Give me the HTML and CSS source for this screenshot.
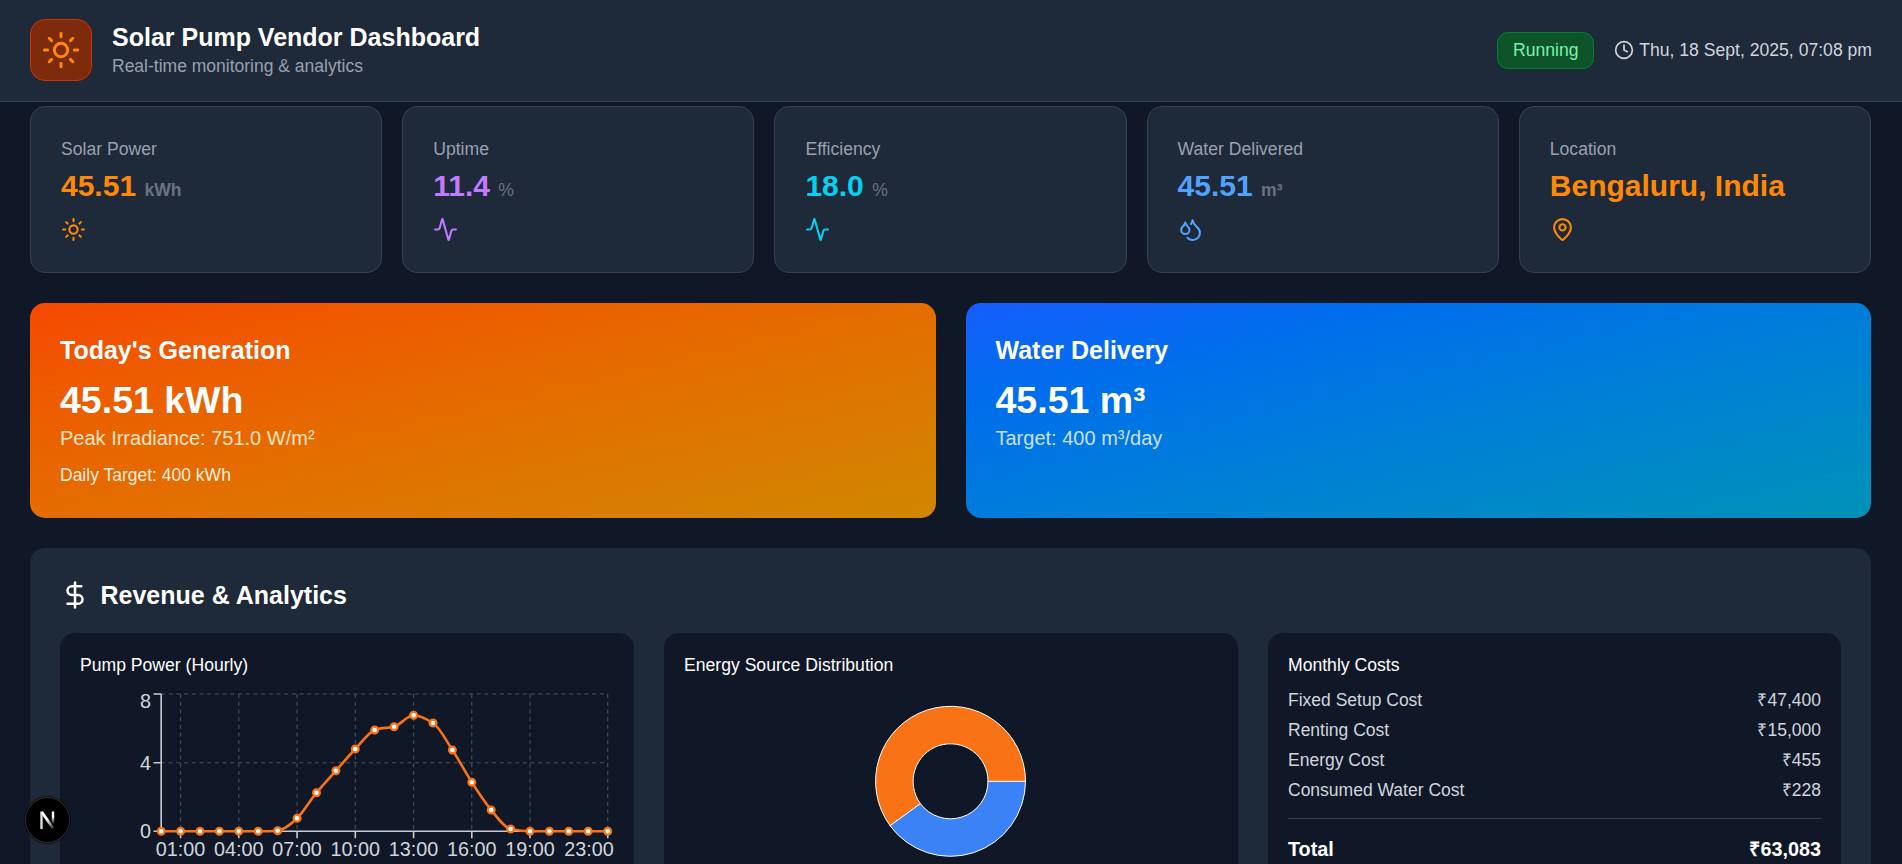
FILE: index.html
```html
<!DOCTYPE html>
<html lang="en">
<head>
<meta charset="utf-8">
<title>Solar Pump Vendor Dashboard</title>
<link rel="stylesheet" href="styles.css">
</head>
<body>
<header class="topbar">
  <div class="brand">
    <div class="brand-icon">
      <svg class="icon-40" viewBox="0 0 24 24"><circle cx="12" cy="12" r="4"/><path d="M12 2v2M12 20v2M4.93 4.93l1.41 1.41M17.66 17.66l1.41 1.41M2 12h2M20 12h2M6.34 17.66l-1.41 1.41M19.07 4.93l-1.41 1.41"/></svg>
    </div>
    <div class="brand-text">
      <h1 class="brand-title">Solar Pump Vendor Dashboard</h1>
      <p class="brand-sub">Real-time monitoring &amp; analytics</p>
    </div>
  </div>
  <div class="status">
    <span class="badge">Running</span>
    <span class="clock">
      <svg class="icon-20" viewBox="0 0 24 24"><circle cx="12" cy="12" r="10"/><path d="M12 6v6l4 2"/></svg>
      Thu, 18 Sept, 2025, 07:08 pm
    </span>
  </div>
</header>

<main class="page">
  <section class="stats">
    <article class="stat">
      <div class="stat-label">Solar Power</div>
      <div class="stat-value c-orange">45.51 <span class="unit">kWh</span></div>
      <svg class="stat-icon c-orange" viewBox="0 0 24 24"><circle cx="12" cy="12" r="4"/><path d="M12 2v2M12 20v2M4.93 4.93l1.41 1.41M17.66 17.66l1.41 1.41M2 12h2M20 12h2M6.34 17.66l-1.41 1.41M19.07 4.93l-1.41 1.41"/></svg>
    </article>
    <article class="stat">
      <div class="stat-label">Uptime</div>
      <div class="stat-value c-purple">11.4 <span class="unit unit-pct">%</span></div>
      <svg class="stat-icon c-purple" viewBox="0 0 24 24"><path d="M22 12h-2.48a2 2 0 0 0-1.93 1.46l-2.35 8.36a.25.25 0 0 1-.48 0L9.24 2.18a.25.25 0 0 0-.48 0l-2.35 8.36A2 2 0 0 1 4.49 12H2"/></svg>
    </article>
    <article class="stat">
      <div class="stat-label">Efficiency</div>
      <div class="stat-value c-cyan">18.0 <span class="unit unit-pct">%</span></div>
      <svg class="stat-icon c-cyan" viewBox="0 0 24 24"><path d="M22 12h-2.48a2 2 0 0 0-1.93 1.46l-2.35 8.36a.25.25 0 0 1-.48 0L9.24 2.18a.25.25 0 0 0-.48 0l-2.35 8.36A2 2 0 0 1 4.49 12H2"/></svg>
    </article>
    <article class="stat">
      <div class="stat-label">Water Delivered</div>
      <div class="stat-value c-blue">45.51 <span class="unit">m³</span></div>
      <svg class="stat-icon c-blue" viewBox="0 0 24 24"><path d="M7 16.3c2.2 0 4-1.83 4-4.05 0-1.16-.57-2.26-1.71-3.19S7.29 6.75 7 5.3c-.29 1.45-1.14 2.84-2.29 3.76S3 11.1 3 12.25c0 2.22 1.8 4.05 4 4.05z"/><path d="M12.56 6.6A10.97 10.97 0 0 0 14 3.02c.5 2.5 2 4.9 4 6.5s3 3.5 3 5.5a6.98 6.98 0 0 1-11.91 4.97"/></svg>
    </article>
    <article class="stat">
      <div class="stat-label">Location</div>
      <div class="stat-value c-orange">Bengaluru, India</div>
      <svg class="stat-icon c-orange" viewBox="0 0 24 24"><path d="M20 10c0 4.993-5.539 10.193-7.399 11.799a1 1 0 0 1-1.202 0C9.539 20.193 4 14.993 4 10a8 8 0 0 1 16 0"/><circle cx="12" cy="10" r="3"/></svg>
    </article>
  </section>

  <section class="hero-row">
    <article class="hero hero-orange">
      <h2 class="hero-title">Today's Generation</h2>
      <div class="hero-value">45.51 kWh</div>
      <div class="hero-note note-orange">Peak Irradiance: 751.0 W/m²</div>
      <div class="hero-foot">Daily Target: 400 kWh</div>
    </article>
    <article class="hero hero-blue">
      <h2 class="hero-title">Water Delivery</h2>
      <div class="hero-value">45.51 m³</div>
      <div class="hero-note note-blue">Target: 400 m³/day</div>
    </article>
  </section>

  <section class="panel">
    <h2 class="panel-title">
      <svg class="icon-30" viewBox="0 0 24 24"><path d="M12 2v20"/><path d="M17 5H9.5a3.5 3.5 0 0 0 0 7h5a3.5 3.5 0 0 1 0 7H6"/></svg>
      Revenue &amp; Analytics
    </h2>
    <div class="panel-grid">
      <article class="tile">
        <h3 class="tile-title">Pump Power (Hourly)</h3>
        <svg class="chart" viewBox="80 677 534 190">
          <g class="grid">
            <path d="M161 694H608M161 762.7H608"/>
            <path d="M180.6 694V831M238.8 694V831M297.1 694V831M355.3 694V831M413.6 694V831M471.8 694V831M530 694V831M607.7 694V831"/>
          </g>
          <g class="axis">
            <path d="M161.2 694V831.3H608M153.5 694h7.7M153.5 762.7h7.7M153.5 831.3h7.7M180.6 831.3v7M238.8 831.3v7M297.1 831.3v7M355.3 831.3v7M413.6 831.3v7M471.8 831.3v7M530 831.3v7M607.7 831.3v7"/>
          </g>
          <g class="ticks">
            <text x="151" y="708" text-anchor="end">8</text>
            <text x="151" y="770" text-anchor="end">4</text>
            <text x="151" y="838" text-anchor="end">0</text>
            <text x="180.6" y="856" text-anchor="middle">01:00</text>
            <text x="238.8" y="856" text-anchor="middle">04:00</text>
            <text x="297.1" y="856" text-anchor="middle">07:00</text>
            <text x="355.3" y="856" text-anchor="middle">10:00</text>
            <text x="413.6" y="856" text-anchor="middle">13:00</text>
            <text x="471.8" y="856" text-anchor="middle">16:00</text>
            <text x="530" y="856" text-anchor="middle">19:00</text>
            <text x="589" y="856" text-anchor="middle">23:00</text>
          </g>
          <path class="line" d="M161.2 831.3L258.2 831.3C264.7 831.3 271.2 831.2 277.7 830.7C284.2 830 290.6 824.6 297.1 818.3C303.6 812 310 800.6 316.5 792.7C323 784.8 329.4 778 335.9 770.7C342.4 763.4 348.8 755.8 355.3 749C361.8 742.2 368.2 732.7 374.7 730C381.2 727.3 387.6 728.4 394.1 726.7C400.6 725 407.1 715.3 413.6 715.3C420.1 715.3 426.5 719 433 723C439.5 727 445.9 740.2 452.4 750C458.9 759.8 465.3 772.3 471.8 782.3C478.3 792.3 484.7 802.2 491.2 810C497.7 817.8 504.1 827.6 510.6 829C517.1 830.4 523.5 831.3 530 831.3L607.7 831.3"/>
          <g class="dots">
            <circle cx="161.2" cy="831.3" r="3.4"/><circle cx="180.6" cy="831.3" r="3.4"/><circle cx="200" cy="831.3" r="3.4"/><circle cx="219.4" cy="831.3" r="3.4"/><circle cx="238.8" cy="831.3" r="3.4"/><circle cx="258.2" cy="831.3" r="3.4"/><circle cx="277.7" cy="830.7" r="3.4"/><circle cx="297.1" cy="818.3" r="3.4"/><circle cx="316.5" cy="792.7" r="3.4"/><circle cx="335.9" cy="770.7" r="3.4"/><circle cx="355.3" cy="749" r="3.4"/><circle cx="374.7" cy="730" r="3.4"/><circle cx="394.1" cy="726.7" r="3.4"/><circle cx="413.6" cy="715.3" r="3.4"/><circle cx="433" cy="723" r="3.4"/><circle cx="452.4" cy="750" r="3.4"/><circle cx="471.8" cy="782.3" r="3.4"/><circle cx="491.2" cy="810" r="3.4"/><circle cx="510.6" cy="829" r="3.4"/><circle cx="530" cy="831.3" r="3.4"/><circle cx="549.4" cy="831.3" r="3.4"/><circle cx="568.8" cy="831.3" r="3.4"/><circle cx="588.2" cy="831.3" r="3.4"/><circle cx="607.7" cy="831.3" r="3.4"/>
          </g>
        </svg>
      </article>
      <article class="tile">
        <h3 class="tile-title">Energy Source Distribution</h3>
        <svg class="chart" viewBox="684 677 534 190">
          <path class="slice-blue" d="M1025.5 781.3A75 75 0 0 1 889.82 825.38L920.16 803.34A37.5 37.5 0 0 0 988 781.3Z"/>
          <path class="slice-orange" d="M889.82 825.38A75 75 0 1 1 1025.5 781.3L988 781.3A37.5 37.5 0 1 0 920.16 803.34Z"/>
        </svg>
      </article>
      <article class="tile">
        <h3 class="tile-title tile-title-costs">Monthly Costs</h3>
        <div class="cost-list">
          <div class="cost-row"><span>Fixed Setup Cost</span><span>₹47,400</span></div>
          <div class="cost-row"><span>Renting Cost</span><span>₹15,000</span></div>
          <div class="cost-row"><span>Energy Cost</span><span>₹455</span></div>
          <div class="cost-row"><span>Consumed Water Cost</span><span>₹228</span></div>
        </div>
        <div class="cost-total"><span>Total</span><span>₹63,083</span></div>
      </article>
    </div>
  </section>
</main>

<div class="dev-badge">
  <svg class="dev-mark" viewBox="0 0 15 18">
    <defs>
      <linearGradient id="nfade" gradientUnits="userSpaceOnUse" x1="3" y1="4" x2="14" y2="17"><stop offset="0.35" stop-color="#fff"/><stop offset="1" stop-color="#fff" stop-opacity="0.15"/></linearGradient>
      <linearGradient id="nstem" gradientUnits="userSpaceOnUse" x1="13" y1="1" x2="13" y2="13"><stop offset="0.4" stop-color="#fff"/><stop offset="1" stop-color="#fff" stop-opacity="0"/></linearGradient>
    </defs>
    <path class="dev-left" d="M1.5 18V0.5"/>
    <path class="dev-diag" d="M1.8 1L13.2 17.5"/>
    <path class="dev-right" d="M13 0.5V13"/>
  </svg>
</div>
</body>
</html>
```
FILE: styles.css
```css
* { box-sizing: border-box; }
html, body { margin: 0; height: 864px; overflow: hidden; }
body { background: #101828; color: #fff; font-family: "Liberation Sans", Arial, sans-serif; }
h1, h2, h3, p { margin: 0; }
svg { fill: none; stroke: currentColor; stroke-width: 2; stroke-linecap: round; stroke-linejoin: round; display: block; flex: none; }

.topbar { height: 102px; padding: 0 30px 1px; background: #1e2939; border-bottom: 1px solid #364153; display: flex; align-items: center; justify-content: space-between; }
.brand { display: flex; align-items: center; gap: 20px; }
.brand-icon { width: 62px; height: 62px; border-radius: 15px; background: #7e2a0c; border: 1px solid #ca3500; color: #ff8904; display: flex; align-items: center; justify-content: center; }
.icon-40 { width: 40px; height: 40px; stroke-width: 1.8; }
.brand-text { display: flex; flex-direction: column; gap: 1px; padding-bottom: 2px; }
.brand-title { font-size: 25px; line-height: 32px; font-weight: 700; }
.brand-sub { font-size: 17.5px; line-height: 24px; color: #99a1af; }
.status { display: flex; align-items: center; gap: 20px; }
.badge { height: 37px; width: 97px; border-radius: 11px; background: #0d542b; border: 1px solid #008236; color: #7bf1a8; font-size: 17.6px; display: flex; align-items: center; justify-content: center; }
.clock { display: flex; align-items: center; gap: 5px; font-size: 17.6px; color: #d1d5dc; }
.icon-20 { width: 20px; height: 20px; }

.page { padding: 4px 31px 0 30px; display: flex; flex-direction: column; gap: 30px; }
.stats { display: grid; grid-template-columns: repeat(5, 1fr); gap: 20px; }
.stat { height: 167px; padding: 30px; background: #1e2939; border: 1px solid #364153; border-radius: 15px; display: flex; flex-direction: column; }
.stat-label { font-size: 17.6px; line-height: 24px; color: #99a1af; }
.stat-value { height: 36px; font-size: 30px; line-height: 36px; font-weight: 700; margin-top: 7px; }
.unit { font-size: 17.6px; line-height: 1; color: #6a7282; }
.unit-pct { font-weight: 400; }
.stat-icon { width: 25px; height: 25px; margin-top: 13px; }
.c-orange { color: #ff8904; }
.c-purple { color: #c27aff; }
.c-cyan { color: #00d3f2; }
.c-blue { color: #51a2ff; }

.hero-row { display: grid; grid-template-columns: 1fr 1fr; gap: 30px; }
.hero { height: 215px; padding: 30px; border-radius: 15px; }
.hero-orange { background: linear-gradient(to bottom right in oklab, #f54900, #d08700); }
.hero-blue { background: linear-gradient(to bottom right in oklab, #155dfc, #0092b8); }
.hero-title { font-size: 25px; line-height: 34px; font-weight: 700; }
.hero-value { font-size: 37.5px; line-height: 46px; font-weight: 700; margin-top: 10px; }
.hero-note { font-size: 20px; line-height: 26px; margin-top: 2px; }
.note-orange { color: #ffe3c4; }
.note-blue { color: #c8e0ff; }
.hero-foot { font-size: 17.5px; line-height: 24px; margin-top: 12px; color: #ffffffe6; }

.panel { padding: 30px; background: #1e2939; border-radius: 15px; }
.panel-title { font-size: 25px; line-height: 34px; font-weight: 700; display: flex; align-items: center; gap: 10.5px; }
.icon-30 { width: 30px; height: 30px; }
.panel-grid { display: grid; grid-template-columns: repeat(3, 1fr); gap: 30px; margin-top: 21px; }
.tile { height: 300px; padding: 20px; background: #101828; border-radius: 15px; }
.tile-title { font-size: 17.6px; line-height: 24px; font-weight: 400; }
.tile-title-costs { margin-bottom: 11px; }
.chart { width: 534px; height: 190px; overflow: visible; }
.grid { stroke: #4a5058; stroke-width: 1.1; stroke-dasharray: 4 3.7; stroke-linecap: butt; }
.axis { stroke: #c8ccd2; stroke-width: 1.6; stroke-linecap: butt; }
.ticks text { font-size: 19.8px; fill: #d1d5dc; stroke: none; }
.line { stroke: #f97316; stroke-width: 2.6; }
.dots circle { fill: #fff; stroke: #f97316; stroke-width: 2.2; }
.slice-blue { fill: #3b82f6; stroke: #fff; stroke-width: 1; }
.slice-orange { fill: #f97316; stroke: #fff; stroke-width: 1; }
.cost-list { display: flex; flex-direction: column; gap: 6px; padding-bottom: 16px; border-bottom: 1px solid #364153; }
.cost-row { display: flex; justify-content: space-between; font-size: 17.5px; line-height: 24px; color: #d1d5dc; }
.cost-total { display: flex; justify-content: space-between; margin-top: 17px; font-size: 19.8px; line-height: 26px; font-weight: 700; }

.dev-badge { position: fixed; left: 25px; bottom: 21px; width: 45px; height: 46px; border-radius: 50%; background: #000; border: 1px solid #2b2b2b; box-shadow: 0 0 0 1px #00000080; display: flex; align-items: center; justify-content: center; }
.dev-mark { width: 15px; height: 18px; stroke-linecap: butt; overflow: hidden; }
.dev-left { stroke: #d8d8d8; stroke-width: 2.4; }
.dev-diag { stroke: url(#nfade); stroke-width: 2.8; }
.dev-right { stroke: url(#nstem); stroke-width: 2.4; }
```
